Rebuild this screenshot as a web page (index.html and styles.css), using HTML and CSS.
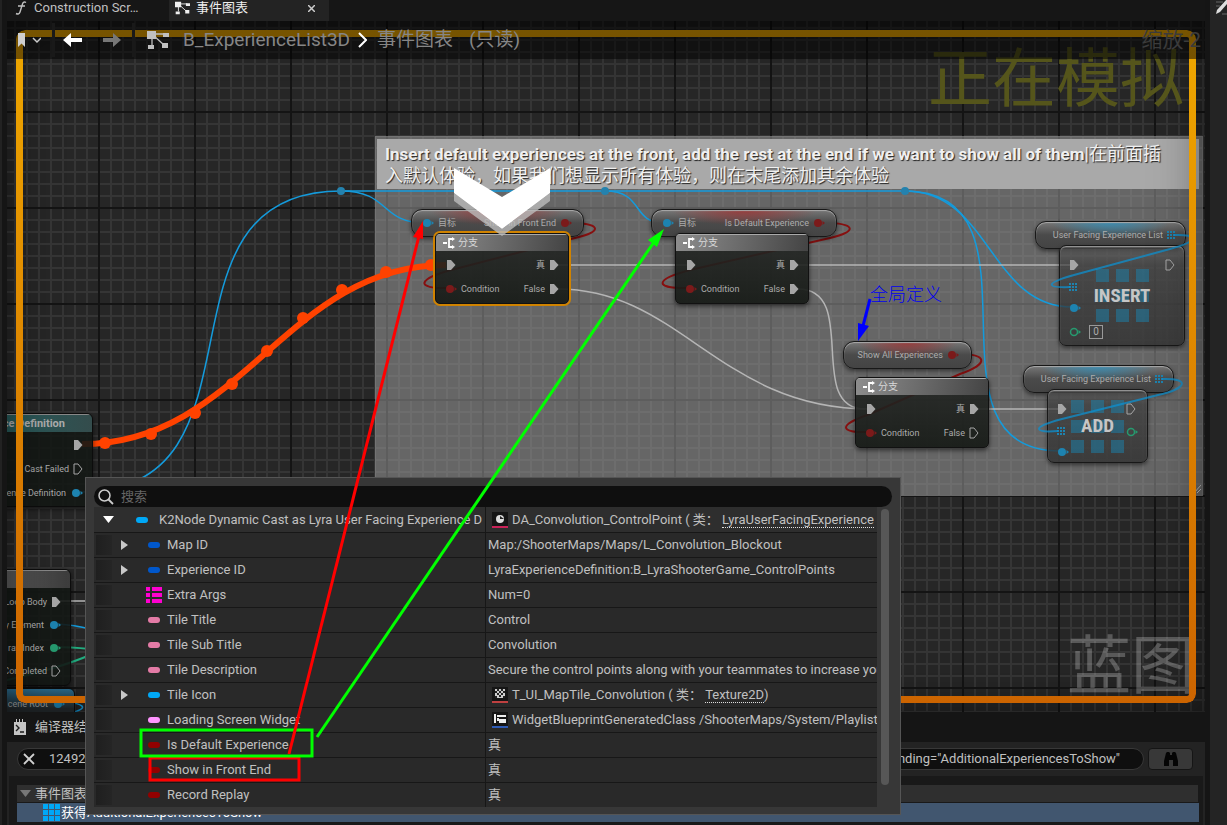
FILE: index.html
```html
<!DOCTYPE html>
<html lang="zh-CN">
<head>
<meta charset="utf-8">
<title>B_ExperienceList3D</title>
<link rel="stylesheet" href="styles.css">
</head>
<body>
<svg class="defs" aria-hidden="true">
  <symbol id="exec" viewBox="0 0 10 12"><path d="M1 1h4l4.500 5L5 11H1z" fill="#a6a6a6"/></symbol>
  <symbol id="exec-open" viewBox="0 0 10 12"><path d="M1 1h4l4 5-4 5H1z" fill="none" stroke="#a6a6a6"/></symbol>
  <symbol id="pin" viewBox="0 0 12 10"><circle cx="5" cy="5" r="4" fill="currentColor"/><path d="M9.500 3L12 5 9.500 7z" fill="currentColor"/></symbol>
  <symbol id="ring" viewBox="0 0 12 10"><circle cx="5" cy="5" r="3.500" fill="none" stroke="currentColor" stroke-width="1.500"/><path d="M9.500 3L12 5 9.500 7z" fill="currentColor"/></symbol>
  <symbol id="array" viewBox="0 0 17 17"><path d="M0 0h5v5H0zM6 0h5v5H6zM12 0h5v5h-5zM0 6h5v5H0zM6 6h5v5H6zM12 6h5v5h-5zM0 12h5v5H0zM6 12h5v5H6zM12 12h5v5h-5z" fill="currentColor"/></symbol>
  <symbol id="dots" viewBox="0 0 8 8"><path d="M0 0h2v2H0zM3 0h2v2H3zM6 0h2v2H6zM0 3h2v2H0zM3 3h2v2H3zM6 3h2v2H6zM0 6h2v2H0zM3 6h2v2H3zM6 6h2v2H6z" fill="currentColor"/></symbol>
  <symbol id="branch" viewBox="0 0 12 12"><path d="M0 6h4M10 2H6v8h4" fill="none" stroke="#fff" stroke-width="1.800"/><path d="M9 0l3 2-3 2zM9 8l3 2-3 2z" fill="#fff"/></symbol>
  <symbol id="graph" viewBox="0 0 22 20"><path d="M6 4h12M5 4v11M6 5l11 10" fill="none" stroke="currentColor" stroke-width="1.300"/><path d="M0 1h9v8H0zM16 3h6v4h-6zM1 15h6v4H1zM15 13h6v5h-6z" fill="currentColor"/></symbol>
  <symbol id="right" viewBox="0 0 7 10"><path d="M0 0l7 5-7 5z" fill="#c8c8c8"/></symbol>
</svg>

<div class="app">
  <div class="rail"></div>
  <main class="main">
    <nav class="tabs">
      <button class="tab"><svg width="12" height="14" viewBox="0 0 12 14"><path d="M11 1.500Q8.500 0 7.500 3L5 11Q4 14 1 12.500M3 5h7" fill="none" stroke="#c0c0c0" stroke-width="1.400"/></svg><span>Construction Scr…</span></button>
      <button class="tab active"><svg width="15" height="14"><use href="#graph"/></svg><span>事件图表</span><svg class="close" width="7" height="7" viewBox="0 0 7 7"><path d="M0 0l7 7M7 0L0 7" stroke="#ccc" stroke-width="1.500"/></svg></button>
    </nav>

    <section class="canvas">
      <div class="world">
        <div class="comment">
          <h2><b>Insert default experiences at the front, add the rest at the end if we want to show all of them</b>|在前面插<br>入默认体验，如果我们想显示所有体验，则在末尾添加其余体验</h2>
          <svg class="grip" width="7" height="8"><path d="M0 8L7 0M3 8l4-4" stroke="#bbb"/></svg>
        </div>

        <svg class="wires">
          <g class="w-blue">
            <path d="M80 492C280 492 141 191 341 191H905"/>
            <path d="M341 191C390 191 380 223 425 223"/>
            <path d="M605 191C645 191 630 223 665 223"/>
            <path d="M905 191C990 191 990 307 1072 307"/>
            <path d="M905 191C1055 191 912 451 1060 451"/>
            <path d="M57 624Q75 625 90 629M60 703C84 702 92 709 68 713"/>
          </g>
          <g class="w-dot"><circle cx="341" cy="191" r="4"/><circle cx="605" cy="191" r="4"/><circle cx="905" cy="191" r="4"/></g>
          <g class="w-white">
            <path d="M558 265H690M798 265H1074M975 409H1062M60 601H90"/>
            <path d="M558 289C680 289 720 409 870 409"/>
            <path d="M798 289C860 289 805 409 865 409"/>
          </g>
          <g class="w-green"><path d="M55 647Q70 647 90 649M7 680Q60 668 90 655"/></g>
          <g class="w-red">
            <path d="M565 223C602 222 604 232 575 238L455 269C416 279 415 289 448 288"/>
            <path d="M818 223C858 222 858 232 830 238L690 270C653 280 654 289 690 288"/>
            <path d="M953 354C990 353 989 364 960 374L870 414C838 425 838 433 870 432"/>
          </g>
          <path class="w-hot" d="M82 444C242 444 286 265 446 265"/>
          <g class="w-hotdot"><circle cx="105" cy="443" r="6"/><circle cx="151" cy="434" r="6"/><circle cx="195" cy="413" r="6"/><circle cx="232" cy="384" r="6"/><circle cx="267" cy="351" r="6"/><circle cx="303" cy="318" r="6"/><circle cx="342" cy="290" r="6"/><circle cx="386" cy="272" r="6"/><circle cx="431" cy="265" r="6"/></g>
        </svg>

        <div class="pill red p-front"><svg class="blue" width="12" height="10"><use href="#pin"/></svg><span>目标</span><span class="end">Show in Front End</span><svg class="crimson" width="12" height="10"><use href="#pin"/></svg></div>
        <div class="pill red p-default"><svg class="blue" width="12" height="10"><use href="#pin"/></svg><span>目标</span><span class="end">Is Default Experience</span><svg class="crimson" width="12" height="10"><use href="#pin"/></svg></div>
        <div class="pill red p-all"><span class="end">Show All Experiences</span><svg class="crimson" width="12" height="10"><use href="#pin"/></svg></div>
        <div class="pill sky p-list1"><span class="end">User Facing Experience List</span><svg class="blue" width="8" height="8"><use href="#dots"/></svg></div>
        <div class="pill sky p-list2"><span class="end">User Facing Experience List</span><svg class="blue" width="8" height="8"><use href="#dots"/></svg></div>

        <div class="branch b-one selected">
          <header><svg width="12" height="12"><use href="#branch"/></svg>分支</header>
          <div class="row"><svg width="10" height="12"><use href="#exec"/></svg><span class="end">真</span><svg width="10" height="12"><use href="#exec"/></svg></div>
          <div class="row"><svg class="crimson" width="12" height="10"><use href="#pin"/></svg><span>Condition</span><span class="end">False</span><svg width="10" height="12"><use href="#exec"/></svg></div>
        </div>
        <div class="branch b-two">
          <header><svg width="12" height="12"><use href="#branch"/></svg>分支</header>
          <div class="row"><svg width="10" height="12"><use href="#exec"/></svg><span class="end">真</span><svg width="10" height="12"><use href="#exec"/></svg></div>
          <div class="row"><svg class="crimson" width="12" height="10"><use href="#pin"/></svg><span>Condition</span><span class="end">False</span><svg width="10" height="12"><use href="#exec"/></svg></div>
        </div>
        <div class="branch b-three">
          <header><svg width="12" height="12"><use href="#branch"/></svg>分支</header>
          <div class="row"><svg width="10" height="12"><use href="#exec"/></svg><span class="end">真</span><svg width="10" height="12"><use href="#exec"/></svg></div>
          <div class="row"><svg class="crimson" width="12" height="10"><use href="#pin"/></svg><span>Condition</span><span class="end">False</span><svg width="10" height="12"><use href="#exec-open"/></svg></div>
        </div>

        <div class="compact c-insert">
          <div class="glyph"><i></i><i></i><i></i><i></i><i></i><i></i><i></i><i></i><i></i></div>
          <strong>INSERT</strong>
          <div class="pins">
            <svg width="10" height="12"><use href="#exec"/></svg>
            <svg class="blue" width="8" height="8"><use href="#dots"/></svg>
            <svg class="blue" width="12" height="10"><use href="#pin"/></svg>
            <div class="index"><svg class="green" width="12" height="10"><use href="#ring"/></svg><span>0</span></div>
          </div>
          <div class="pins"><svg width="10" height="12"><use href="#exec-open"/></svg></div>
        </div>
        <div class="compact c-add">
          <div class="glyph"><i></i><i></i><i></i><i></i><i></i><i></i><i></i><i></i><i></i></div>
          <strong>ADD</strong>
          <div class="pins">
            <svg width="10" height="12"><use href="#exec"/></svg>
            <svg class="blue" width="8" height="8"><use href="#dots"/></svg>
            <svg class="blue" width="12" height="10"><use href="#pin"/></svg>
          </div>
          <div class="pins"><svg width="10" height="12"><use href="#exec-open"/></svg><svg class="green" width="12" height="10"><use href="#ring"/></svg></div>
        </div>
        <svg class="wires over">
          <path d="M1174 235C1200 234 1197 242 1170 249L1074 275C1042 284 1048 288 1070 287"/>
          <path d="M1162 379C1192 378 1186 389 1158 395L1062 419C1028 428 1036 433 1058 431"/>
        </svg>

        <div class="side n-cast">
          <header>nce Definition</header>
          <div class="row"><svg width="10" height="12"><use href="#exec"/></svg></div>
          <div class="row">Cast Failed<svg width="10" height="12"><use href="#exec-open"/></svg></div>
          <div class="row">ence Definition<svg class="blue" width="12" height="10"><use href="#pin"/></svg></div>
        </div>
        <div class="side n-loop">
          <header></header>
          <div class="row">Loop Body<svg width="10" height="12"><use href="#exec"/></svg></div>
          <div class="row">y Element<svg class="blue" width="12" height="10"><use href="#pin"/></svg></div>
          <div class="row">ray Index<svg class="green" width="12" height="10"><use href="#pin"/></svg></div>
          <div class="row">Completed<svg width="10" height="12"><use href="#exec-open"/></svg></div>
        </div>
        <div class="side n-root"><div class="row">cene Root<svg class="blue" width="12" height="10"><use href="#pin"/></svg></div></div>

        <svg class="marker" width="96" height="68"><path d="M0 25L48 61 96 25v8L48 68 0 33z" fill="#bbb" opacity=".8"/><path d="M0 0l48 29L96 0v25L48 61 0 25z" fill="#fff"/></svg>
      </div>
      <div class="vignette"></div>
      <div class="blueprint">蓝图</div>
      <div class="simulating">正在模拟</div>
      <div class="frame"></div>
      <div class="crumbs">
        <button class="mark"><svg width="23" height="14" viewBox="0 0 23 14"><path d="M0 0h7v14l-3.500-3.500L0 14z" fill="#cfcfcf"/><path d="M15 5l4 4 4-4" fill="none" stroke="#ccc" stroke-width="1.500"/></svg></button>
        <button class="nav"><svg width="20" height="14" viewBox="0 0 20 14"><path d="M0 7l8-7v5h11v4H8v5z" fill="#fff"/></svg><svg width="20" height="14" viewBox="0 0 20 14"><path d="M19 7l-8-7v5H1v4h10v5z" fill="#777"/></svg></button>
        <svg class="gicon" width="22" height="20"><use href="#graph"/></svg>
        <a href="#list">B_ExperienceList3D</a>
        <svg width="9" height="16" viewBox="0 0 9 16"><path d="M1 1l7 7-7 7" fill="none" stroke="#fff" stroke-width="2"/></svg>
        <span>事件图表</span><span>(只读)</span>
        <span class="zoom">缩放-2</span>
      </div>
    </section>

    <div class="results-tab"><svg width="12" height="16" viewBox="0 0 12 16"><path d="M0 3h2V0h1v3h2V0h1v3h2V0h1v3h3v13H0z" fill="#c4c4c4"/><path d="M2 6l3 3-3 3M6 13h4" fill="none" stroke="#1a1a1a" stroke-width="1.400"/></svg>编译器结果</div>
    <section class="results">
      <div class="find">
        <div class="field">
          <button aria-label="清除"><svg width="12" height="12" viewBox="0 0 12 12"><path d="M1 1l10 10M11 1L1 11" stroke="#d0d0d0" stroke-width="1.800"/></svg></button>
          <input aria-label="查找" value="12492">
          <span>nding="AdditionalExperiencesToShow"</span>
        </div>
        <button class="bino" aria-label="查找"><svg width="14" height="14" viewBox="0 0 14 14"><path d="M2 1l1-1h2l1 1v2h2V1l1-1h2l1 1 2 8v5H9V8H5v6H0V9z" fill="#050505"/></svg></button>
      </div>
      <div class="tree">
        <div class="group"><svg width="11" height="7"><path d="M0 0h11L5.500 7z" fill="#777"/></svg>事件图表</div>
        <div class="hit"><svg width="17" height="17"><use href="#array"/></svg>获得AdditionalExperiencesToShow</div>
      </div>
    </section>
  </main>
  <aside class="dock"><svg width="11" height="15" viewBox="0 0 11 15"><path d="M0 2h7M0 6h4M6 14h5" stroke="#666"/><path d="M0 14l1-4L11-1v5L4 12z" fill="#ddd"/></svg></aside>

  <div class="watch">
    <div class="search">
      <svg width="18" height="18" viewBox="0 0 18 18"><circle cx="7.500" cy="7.500" r="5.500" fill="none" stroke="#ccc" stroke-width="1.500"/><path d="M11.500 11.500l4.500 4.500" stroke="#ccc" stroke-width="1.800"/></svg>
      <input aria-label="搜索" placeholder="搜索">
    </div>
    <div class="body">
      <table>
        <colgroup><col class="c1"><col></colgroup>
        <tr class="root"><td><div class="cell"><svg class="open" width="11" height="7"><path d="M0 0h11L5.500 7z" fill="#fff"/></svg><i class="cap cyan"></i>K2Node Dynamic Cast as Lyra User Facing Experience D</div></td><td><div class="cell"><span class="thumb rose"><svg width="8" height="8" viewBox="0 0 8 8"><circle cx="4" cy="4" r="4" fill="#ddd"/><path d="M4 4V1l4 3z" fill="#222"/></svg></span>DA_Convolution_ControlPoint ( 类： <a href="#class">LyraUserFacingExperience</a></div></td></tr>
        <tr><td><div class="cell"><svg class="arrow"><use href="#right"/></svg><i class="cap navy"></i>Map ID</div></td><td>Map:/ShooterMaps/Maps/L_Convolution_Blockout</td></tr>
        <tr><td><div class="cell"><svg class="arrow"><use href="#right"/></svg><i class="cap navy"></i>Experience ID</div></td><td>LyraExperienceDefinition:B_LyraShooterGame_ControlPoints</td></tr>
        <tr><td><div class="cell"><i class="arrow"></i><svg class="args" width="16" height="16"><path d="M0 0h4v4H0zM6 0h10v4H6zM0 6h4v4H0zM6 6h10v4H6zM0 12h4v4H0zM6 12h10v4H6z" fill="#ff00d0"/></svg>Extra Args</div></td><td>Num=0</td></tr>
        <tr><td><div class="cell"><i class="arrow"></i><i class="cap pink"></i>Tile Title</div></td><td>Control</td></tr>
        <tr><td><div class="cell"><i class="arrow"></i><i class="cap pink"></i>Tile Sub Title</div></td><td>Convolution</td></tr>
        <tr><td><div class="cell"><i class="arrow"></i><i class="cap pink"></i>Tile Description</div></td><td>Secure the control points along with your teammates to increase your</td></tr>
        <tr><td><div class="cell"><svg class="arrow"><use href="#right"/></svg><i class="cap cyan"></i>Tile Icon</div></td><td><div class="cell"><span class="thumb brick"><svg width="10" height="9" viewBox="0 0 10 9"><path d="M0 0h10v9H0z" fill="#ccc"/><path d="M2 0h2v2H2zM6 0h2v2H6zM0 2h2v2H0zM4 2h2v2H4zM8 2h2v2H8zM2 4h2v2H2zM6 4h2v2H6zM0 7h2v2H0zM4 6h2v2H4zM8 7h2v2H8z" fill="#222"/></svg></span>T_UI_MapTile_Convolution ( 类： <a href="#class">Texture2D</a>)</div></td></tr>
        <tr><td><div class="cell"><i class="arrow"></i><i class="cap lilac"></i>Loading Screen Widget</div></td><td><div class="cell"><span class="thumb azure"><svg width="12" height="9" viewBox="0 0 12 9"><path d="M0 0h2v9H0zM3 1h9v2H3zM3 4h2v1h7v4H5V7H3z" fill="#eee"/></svg></span>WidgetBlueprintGeneratedClass /ShooterMaps/System/Playlists</div></td></tr>
        <tr><td><div class="cell"><i class="arrow"></i><i class="cap maroon"></i>Is Default Experience</div></td><td>真</td></tr>
        <tr><td><div class="cell"><i class="arrow"></i><i class="cap maroon"></i>Show in Front End</div></td><td>真</td></tr>
        <tr><td><div class="cell"><i class="arrow"></i><i class="cap maroon"></i>Record Replay</div></td><td>真</td></tr>
      </table>
      <div class="scroll"></div>
    </div>
  </div>

  <svg class="notes">
    <rect x="150" y="758" width="149" height="22" fill="none" stroke="#f00" stroke-width="3"/>
    <rect x="141" y="730" width="171" height="26" fill="none" stroke="#0f0" stroke-width="3"/>
    <path d="M289 754L419 236" stroke="#f00" stroke-width="3"/><path d="M423 221l0 18-10-2z" fill="#f00"/>
    <path d="M317 737L654 242" stroke="#0f0" stroke-width="3"/><path d="M664 229l-7 18-9-7z" fill="#0f0"/>
    <path d="M870 299L863 326" stroke="#00f" stroke-width="3"/><path d="M858 341V323l11 3z" fill="#00f"/>
    <text x="870" y="301">全局定义</text>
  </svg>
</div>
</body>
</html>
```
FILE: styles.css
```css
* { box-sizing: border-box; }
body {
  margin: 0;
  background: #151515;
  color: #c0c0c0;
  font: 13px/16px Roboto, "Noto Sans CJK SC", sans-serif;
}
button, input { font: inherit; color: inherit; background: none; border: 0; padding: 0; margin: 0; }
a { color: inherit; text-decoration: none; }
svg { display: block; flex: none; }
.defs { position: absolute; width: 0; height: 0; }

.app {
  position: relative;
  display: grid;
  grid-template-columns: 7px 1fr 17px;
  height: 100vh;
  overflow: hidden;
}
.rail { background: linear-gradient(90deg, #222 2px, #151515 2px); }
.dock { background: #242424; padding-left: 6px; overflow: hidden; }
.main { display: flex; flex-direction: column; min-width: 0; padding-right: 5px; background: #151515; }

.tabs { display: flex; height: 21px; background: #161616; }
.tab { display: flex; align-items: center; gap: 7px; width: 162px; padding: 0 8px 5px; white-space: nowrap; }
.tab.active { width: 160px; gap: 6px; padding-left: 6px; background: #232323; color: #eee; }
.tab .close { margin: 0 6px 0 auto; }

/* graph canvas */
.canvas {
  position: relative;
  flex: 1;
  overflow: hidden;
  background:
    linear-gradient(90deg, #141414 2px, transparent 2px) 91px 0 / 96px 96px,
    linear-gradient(#141414 2px, transparent 2px) 0 90px / 96px 96px,
    linear-gradient(90deg, #353535 2px, transparent 2px) 7px 0 / 12px 12px,
    linear-gradient(#353535 2px, transparent 2px) 0 6px / 12px 12px,
    #262626;
}
.world { position: absolute; inset: -21px -5px 0 -7px; font-size: 9px; line-height: 12px; color: #acacac; }
.wires { position: absolute; inset: 0; width: 100%; height: 100%; fill: none; }
.wires path { fill: none; stroke-width: 2; }
.w-blue path { stroke: #149bdc; stroke-width: 1.5; }
.over path { stroke: #0c90d0; stroke-width: 2; opacity: .75; }
.w-dot { fill: #2482ae; }
.w-white path { stroke: #b5b5b5; stroke-width: 1.5; }
.w-green path { stroke: #22ad80; }
.w-red path { stroke: #861010; }
.wires .w-hot { stroke: #ff4200; stroke-width: 6; }
.w-hotdot { fill: #ff4200; }

.comment {
  position: absolute;
  left: 375px; top: 136px; right: 7px; height: 360px;
  padding: 2px 3px 0 1px;
  background: rgba(166, 166, 166, .5);
  border: 1px solid rgba(130, 130, 130, .3);
}
.comment h2 {
  margin: 0;
  height: 50px;
  padding: 4px 8px;
  background: #a9a9a9;
  color: #f0f0f0;
  font-size: 18px;
  line-height: 22px;
  font-weight: 400;
  text-shadow: 1px 1px 1px #222;
  white-space: nowrap;
}
.comment b { font-size: 17px; }
.grip { position: absolute; right: 1px; bottom: 2px; }

.blue { color: #1d83b0; }
.crimson { color: #7b1a1a; }
.green { color: #269a6f; }
.end { margin-left: auto; }

.pill {
  position: absolute;
  display: flex;
  align-items: center;
  gap: 4px;
  height: 28px;
  padding: 0 11px 0 10px;
  border: 1px solid #181818;
  border-radius: 11px;
  box-shadow: inset 0 1px 1px #aaa, 0 2px 4px rgba(0, 0, 0, .5);
  white-space: nowrap;
}
.red { background: radial-gradient(ellipse 40% 60% at 50% 0, rgba(160, 45, 45, .8), transparent), linear-gradient(#777, #4a4a4a 50%, #444); }
.sky { background: radial-gradient(ellipse 40% 60% at 50% 0, rgba(45, 145, 190, .8), transparent), linear-gradient(#777, #4a4a4a 50%, #444); }
.p-front { left: 411px; top: 209px; width: 173px; }
.p-default { left: 651px; top: 209px; width: 186px; }
.p-all { left: 843px; top: 341px; width: 129px; padding-right: 10px; }
.p-all .crimson { margin-right: 2px; }
.p-list1 { left: 1035px; top: 221px; width: 151px; padding-right: 10px; }
.p-list2 { left: 1023px; top: 365px; width: 151px; padding-right: 10px; }

.branch {
  position: absolute;
  width: 134px;
  border: 1px solid #111;
  border-radius: 5px;
  background: linear-gradient(rgba(36, 38, 36, .88), rgba(22, 26, 22, .92));
  box-shadow: 0 2px 5px rgba(0, 0, 0, .6);
  overflow: hidden;
}
.branch header {
  display: flex;
  align-items: center;
  gap: 3px;
  height: 17px;
  padding-left: 7px;
  background: linear-gradient(100deg, #8d8d8d, #6d6d6d 45%, transparent), #444;
  border-top: 1px solid #aaa;
  color: #d8d8d8;
  font-size: 10px;
}
.branch .row { display: flex; align-items: center; gap: 4px; height: 24px; padding: 4px 9px 0 10px; }
.branch .row:last-child { height: 28px; padding: 4px 9px 4px; }
.b-one { left: 435px; top: 233px; }
.b-two { left: 675px; top: 233px; }
.b-three { left: 855px; top: 377px; }
.selected { box-shadow: 0 0 0 2px #d08300; }

.compact {
  position: absolute;
  display: flex;
  justify-content: space-between;
  border: 1px solid #181818;
  border-radius: 7px;
  background: linear-gradient(rgba(90, 90, 90, .6), rgba(55, 55, 55, .65) 20%, rgba(48, 48, 48, .8));
  box-shadow: inset 0 1px 1px #999, 0 2px 4px rgba(0, 0, 0, .5);
  padding: 13px 9px;
}
.compact strong { position: absolute; inset: 0; display: grid; place-content: center; font: 700 19px/20px "Roboto Condensed", Roboto, sans-serif; color: #c6c6c6; }
.glyph { position: absolute; inset: 0; display: grid; grid-template-columns: repeat(3, 13px); gap: 7px; place-content: center; }
.glyph i { height: 13px; background: rgba(30, 125, 165, .55); }
.pins { position: relative; display: flex; flex-direction: column; gap: 12px; }
.index { display: flex; align-items: center; gap: 8px; }
.index span { border: 1px solid #999; width: 14px; height: 14px; text-align: center; font-size: 10px; }
.c-insert { left: 1059px; top: 245px; width: 126px; height: 101px; }
.c-add { left: 1047px; top: 389px; width: 101px; height: 74px; }

.side {
  position: absolute;
  left: -60px;
  border: 1px solid #0c0c0c;
  border-radius: 6px;
  background: rgba(20, 24, 21, .9);
  box-shadow: 0 2px 5px rgba(0, 0, 0, .6);
  text-align: right;
  white-space: nowrap;
  overflow: hidden;
}
.side header { height: 18px; font-size: 11px; line-height: 18px; font-weight: 700; border-top: 1px solid #888; }
.side .row { display: flex; align-items: center; justify-content: flex-end; gap: 4px; height: 24px; padding-right: 9px; }
.side .row .blue, .side .row .green { margin-left: 1px; }
.n-cast { top: 413px; width: 153px; padding-bottom: 1px; }
.n-cast header { background: linear-gradient(90deg, #265b5b 40%, #344c4c); padding-right: 27px; margin-bottom: 1px; }
.n-loop { top: 569px; width: 131px; padding-bottom: 3px; }
.n-loop .row { height: 23px; }
.n-loop header { background: linear-gradient(90deg, #777, #3c3c3c); margin-bottom: 2px; }
.n-root { top: 688px; width: 135px; height: 30px; padding-top: 3px; background: linear-gradient(#2c6f92, #252b2e 70%); }
.marker { position: absolute; left: 454px; top: 168px; }

.vignette { position: absolute; inset: 0; box-shadow: inset 0 0 50px rgba(0, 0, 0, .5); }
.simulating { position: absolute; right: 21px; top: 27px; font-size: 64px; line-height: 64px; color: #55551b; }
.blueprint { position: absolute; right: 10px; bottom: 13px; font-size: 64px; line-height: 64px; color: rgba(255, 255, 255, .24); }
.frame {
  position: absolute;
  inset: 9px 9px 9px 9px;
  padding: 7px;
  border-radius: 9px;
  background: linear-gradient(#efa800, #cc6400);
  mask: linear-gradient(#000 0 0) content-box exclude, linear-gradient(#000 0 0);
}
.crumbs {
  position: absolute;
  inset: 0 0 auto;
  display: flex;
  align-items: center;
  gap: 8px;
  height: 38px;
  padding-left: 11px;
  background: rgba(0, 0, 0, .5);
  color: #868686;
  font-size: 19px;
  line-height: 24px;
}
.mark { height: 34px; padding-right: 11px; border-right: 3px solid #191919; }
.nav { display: flex; gap: 19px; height: 34px; padding-right: 10px; align-items: center; border-right: 3px solid #191919; }
.gicon { margin: 0 6px 0 4px; color: #c0c0c0; }
.crumbs a + svg { margin-right: 2px; }
.crumbs span + span { margin-left: 8px; }
.crumbs .zoom { margin: 0 4px 0 auto; color: #3b3b3b; font-size: 21px; }

/* compiler results */
.results-tab { display: flex; gap: 9px; align-items: center; height: 30px; padding-left: 7px; }
.results { height: 83px; padding: 6px 2px 0; background: #232323; }
.find { display: flex; gap: 4px; padding: 0 10px 0 8px; }
.field { display: flex; flex: 1; align-items: center; height: 22px; padding: 0 23px 0 5px; border: 1px solid #383838; border-radius: 11px; background: #0f0f0f; }
.field input { flex: 1; min-width: 0; margin-left: 14px; }
.bino { display: grid; place-content: center; width: 45px; border: 1px solid #151515; border-radius: 4px; background: #383838; }
.tree { height: 49px; margin-top: 6px; padding: 9px 4px 0 8px; background: #191919; }
.group { display: flex; align-items: center; gap: 4px; height: 17px; padding-left: 3px; margin-right: 1px; background: #2f2f2f; }
.hit { display: flex; align-items: center; gap: 1px; height: 19px; margin-top: 1px; padding-left: 26px; background: #41566f; color: #fff; }
.hit svg { color: #00a8f6; }

/* watch popup */
.watch {
  position: absolute;
  left: 85px; top: 477px; width: 816px;
  padding: 8px 8px 7px;
  background: #373737;
  border: 1px solid #555;
}
.search { display: flex; align-items: center; gap: 6px; height: 21px; padding-left: 3px; border-radius: 11px; background: #0f0f0f; }
.search input { flex: 1; }
.search input::placeholder { color: #666; }
.body { display: flex; gap: 4px; padding-right: 3px; }
table { flex: 1; width: 0; table-layout: fixed; border-collapse: collapse; background: #292929; }
.c1 { width: 50%; }
td { height: 25px; padding: 0 0 0 2px; border-bottom: 1px solid #171717; overflow: hidden; white-space: nowrap; }
td:first-child { border-right: 1px solid #171717; padding: 0; }
tr:last-child td { border-bottom: 0; }
.root { background: #2e2e2e; }
.cell { display: flex; align-items: center; height: 24px; white-space: pre; }
.arrow { width: 7px; height: 10px; margin-right: 20px; }
tr:not(.root) td:first-child .cell { padding-left: 27px; background: linear-gradient(90deg, #1f1f1f, #252525) 2px 2px / 16px 20px no-repeat; }
.root .cell { padding-top: 1px; }
.open { margin: 0 22px 0 9px; }
.cap { flex: none; width: 12px; height: 6px; margin-right: 7px; border-radius: 3px; }
.root .cap { margin-right: 11px; }
.args { margin: 0 5px 0 -2px; }
.cyan { background: #00a8f6; }
.navy { background: #0057cb; }
.pink { background: #e47ba6; }
.lilac { background: #ff94ff; }
.maroon { background: #920000; }
.thumb { flex: none; display: grid; place-content: center; width: 16px; height: 16px; margin: 0 4px; background: #151515; border-bottom: 2px solid; }
.rose { border-color: #c92258; }
.brick { border-color: #be4040; }
.azure { border-color: #2e5bb5; }
.cell a { border-bottom: 1px dotted #ddd; line-height: 15px; }
.scroll { width: 8px; height: 276px; margin-top: 2px; border-radius: 4px; background: #575757; }

.notes { position: absolute; inset: 0; width: 100%; height: 100%; pointer-events: none; }
.notes text { fill: #0000f0; font: 300 18px "Noto Sans CJK SC", sans-serif; }
```
